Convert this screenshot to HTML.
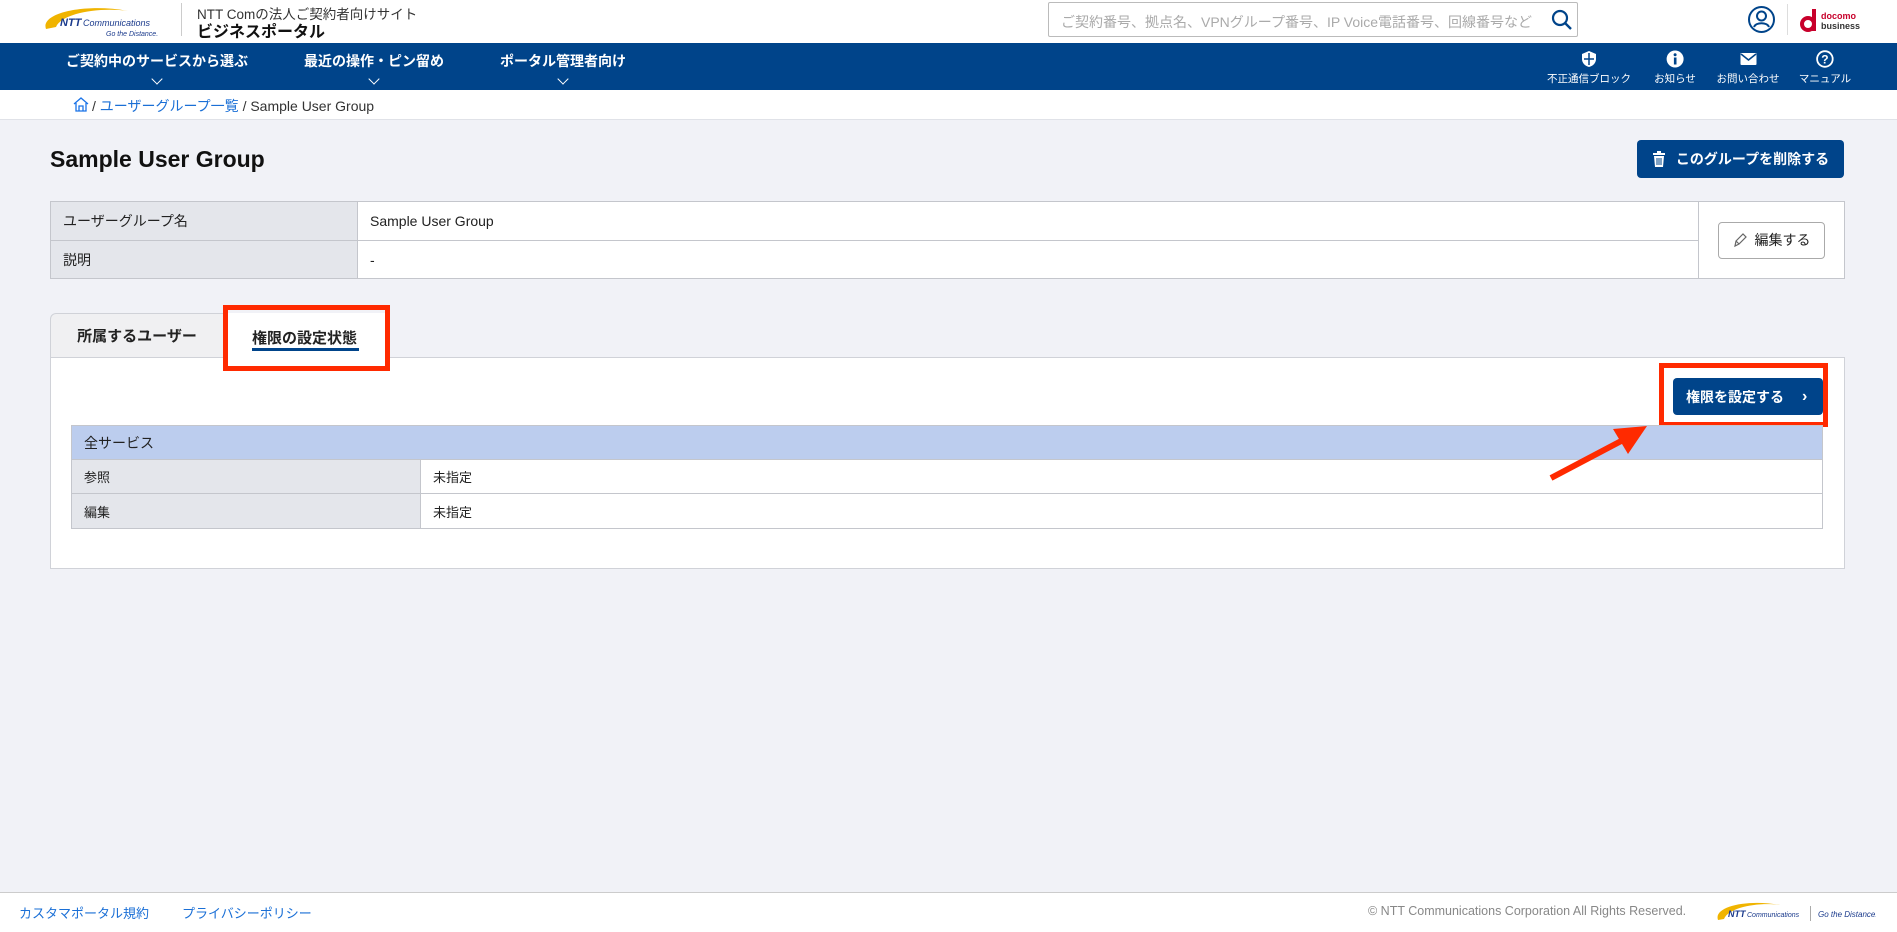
<!DOCTYPE html>
<html><head><meta charset="utf-8"><style>
*{box-sizing:border-box;margin:0;padding:0}
body{width:1897px;height:932px;background:#f1f2f7;font-family:"Liberation Sans","Noto Sans CJK JP",sans-serif;color:#222;position:relative;overflow:hidden}
.abs{position:absolute}
.hdr{left:0;top:0;width:1897px;height:43px;background:#fff}
.nav{left:0;top:43px;width:1897px;height:47px;background:#00448a;color:#fff}
.bc{left:0;top:90px;width:1897px;height:30px;background:#fff;border-bottom:1px solid #e0e2e8;font-size:14px}
.navi{position:absolute;top:8px;font-size:14px;font-weight:bold;text-align:center;transform:translateX(-50%);white-space:nowrap}
.navi .ch{display:block;margin:4px auto 0;width:8px;height:8px;border-right:1.3px solid #fff;border-bottom:1.3px solid #fff;transform:rotate(45deg)}
.ic{position:absolute;top:7px;transform:translateX(-50%);text-align:center;font-size:10.5px;white-space:nowrap}
.ic svg{display:block;margin:0 auto 3px}
table{border-collapse:collapse}
td{border:1px solid #c4c6cc;font-size:14px;padding:0 12px}
.lab{background:#e4e6eb}
.btn{background:#00448a;color:#fff;border-radius:4px;font-weight:bold;font-size:14px;display:flex;align-items:center;justify-content:center}
.red{border:5px solid #ff2a00}
</style></head><body>
<div class="abs hdr">
  <svg class="abs" style="left:40px;top:5px" width="125" height="33" viewBox="0 0 125 33">
    <path d="M6 24 C0 8 45 -2 88 6 C60 2 22 8 16 22 Z" fill="#f0b400"/>
    <text x="20" y="21" font-family="Liberation Sans" font-style="italic" font-weight="bold" font-size="11" fill="#1a3a8c">NTT</text>
    <text x="43" y="21" font-family="Liberation Sans" font-style="italic" font-size="9" fill="#1a3a8c">Communications</text>
    <text x="66" y="31" font-family="Liberation Sans" font-style="italic" font-size="7" fill="#1a3a8c">Go the Distance.</text>
  </svg>
  <div class="abs" style="left:181px;top:3px;width:1px;height:33px;background:#ccc"></div>
  <div class="abs" style="left:197px;top:3px;font-size:13.5px;color:#333">NTT Comの法人ご契約者向けサイト</div>
  <div class="abs" style="left:197px;top:18px;font-size:16px;font-weight:bold;color:#111">ビジネスポータル</div>
  <div class="abs" style="left:1048px;top:2px;width:530px;height:35px;border:1px solid #bbb;border-radius:2px;background:#fff">
    <span class="abs" style="left:12px;top:9px;font-size:14px;color:#aaa;white-space:nowrap">ご契約番号、拠点名、VPNグループ番号、IP Voice電話番号、回線番号など</span>
    <svg class="abs" style="left:502px;top:6px" width="22" height="22" viewBox="0 0 22 22"><circle cx="9" cy="9" r="7" fill="none" stroke="#00448a" stroke-width="2.2"/><path d="M14 14l6 6" stroke="#00448a" stroke-width="2.4"/></svg>
  </div>
  <svg class="abs" style="left:1747px;top:5px" width="29" height="29" viewBox="0 0 29 29"><circle cx="14.5" cy="14.5" r="12.5" fill="none" stroke="#00448a" stroke-width="2"/><circle cx="14.5" cy="11" r="4.5" fill="none" stroke="#00448a" stroke-width="2"/><path d="M7 22c2-5 13-5 15 0" fill="none" stroke="#00448a" stroke-width="2"/></svg>
  <div class="abs" style="left:1787px;top:4px;width:1px;height:31px;background:#ddd"></div>
  <svg class="abs" style="left:1800px;top:7px" width="68" height="26" viewBox="0 0 68 26"><circle cx="8" cy="17" r="6" fill="none" stroke="#c8002b" stroke-width="4"/><rect x="12" y="2" width="4" height="22" fill="#c8002b"/><text x="21" y="12" font-family="Liberation Sans" font-weight="bold" font-size="9" fill="#c8002b">docomo</text><text x="21" y="22" font-family="Liberation Sans" font-weight="bold" font-size="9" fill="#333">business</text></svg>
</div>
<div class="abs nav">
  <div class="navi" style="left:157px">ご契約中のサービスから選ぶ<span class="ch"></span></div>
  <div class="navi" style="left:374px">最近の操作・ピン留め<span class="ch"></span></div>
  <div class="navi" style="left:563px">ポータル管理者向け<span class="ch"></span></div>
  <div class="ic" style="left:1589px"><svg width="16" height="18" viewBox="0 0 16 18"><path d="M8 1L15 4v5c0 4-3 7-7 8C4 16 1 13 1 9V4z" fill="#fff"/><path d="M8 3v12M3 9h10" stroke="#00448a" stroke-width="1.5"/></svg>不正通信ブロック</div>
  <div class="ic" style="left:1675px"><svg width="18" height="18" viewBox="0 0 18 18"><circle cx="9" cy="9" r="8.5" fill="#fff"/><rect x="7.8" y="7.5" width="2.6" height="7" fill="#00448a"/><circle cx="9" cy="4.8" r="1.5" fill="#00448a"/></svg>お知らせ</div>
  <div class="ic" style="left:1748px"><svg width="18" height="18" viewBox="0 0 18 18"><rect x="1" y="3" width="16" height="12" rx="1" fill="#fff"/><path d="M1.5 4l7.5 6 7.5-6" fill="none" stroke="#00448a" stroke-width="1.6"/></svg>お問い合わせ</div>
  <div class="ic" style="left:1825px"><svg width="18" height="18" viewBox="0 0 18 18"><circle cx="9" cy="9" r="7.8" fill="none" stroke="#fff" stroke-width="1.8"/><text x="9" y="13.5" text-anchor="middle" font-family="Liberation Sans" font-weight="bold" font-size="12" fill="#fff">?</text></svg>マニュアル</div>
</div>
<div class="abs bc">
  <svg class="abs" style="left:73px;top:7px" width="16" height="15" viewBox="0 0 16 15"><path d="M1 7L8 1l7 6M3 6v8h10V6M6 14V9h4v5" fill="none" stroke="#1a73e8" stroke-width="1.3"/></svg>
  <span class="abs" style="left:92px;top:6px;white-space:nowrap"><span style="color:#333">/</span> <span style="color:#1a6fd6">ユーザーグループ一覧</span> <span style="color:#333">/ Sample User Group</span></span>
</div>
<div class="abs" style="left:50px;top:146px;font-size:23px;font-weight:bold;color:#111">Sample User Group</div>
<div class="abs btn" style="left:1637px;top:140px;width:207px;height:38px">
  <svg width="14" height="16" viewBox="0 0 14 16" style="margin-right:10px"><rect x="1" y="2" width="12" height="2" fill="#fff"/><rect x="5" y="0" width="4" height="2" fill="#fff"/><path d="M2 5h10l-1 11H3z" fill="#fff"/><path d="M5 7v7M7 7v7M9 7v7" stroke="#00448a" stroke-width="1"/></svg>このグループを削除する
</div>
<table class="abs" style="left:50px;top:201px;width:1795px;background:#fff">
  <tr style="height:39px"><td class="lab" style="width:307px">ユーザーグループ名</td><td>Sample User Group</td><td rowspan="2" style="width:146px;text-align:center"><div style="display:inline-flex;align-items:center;justify-content:center;width:107px;height:37px;border:1px solid #aaa;border-radius:4px;font-size:14px"><svg width="14" height="16" viewBox="0 0 14 16" style="margin-right:8px"><path d="M2 14l1-5 7-7 3 3-7 7z M3 9l3 3" fill="none" stroke="#666" stroke-width="1.2"/></svg>編集する</div></td></tr>
  <tr style="height:38px"><td class="lab">説明</td><td>-</td></tr>
</table>
<div class="abs" style="left:50px;top:313px;width:174px;height:44px;background:#f0f0f2;border:1px solid #d0d2d8;border-bottom:none;border-radius:6px 0 0 0;font-size:15px;font-weight:bold;display:flex;align-items:center;justify-content:center">所属するユーザー</div>
<div class="abs" style="left:50px;top:357px;width:1795px;height:212px;background:#fff;border:1px solid #d0d2d8"></div>
<div class="abs" style="left:224px;top:313px;width:163px;height:45px;background:#fff"></div>
<div class="abs" style="left:252px;top:327px;font-size:15px;font-weight:bold;white-space:nowrap">権限の設定状態</div>
<div class="abs" style="left:252px;top:348px;width:107px;height:3px;background:#00448a"></div>
<div class="abs red" style="left:223px;top:305px;width:167px;height:66px"></div>
<div class="abs btn" style="left:1673px;top:378px;width:150px;height:37px;justify-content:flex-start;padding-left:13px">権限を設定する<span style="margin-left:18px;font-size:16px">&#x203A;</span></div>
<div class="abs red" style="left:1659px;top:363px;width:169px;height:64px"></div>
<table class="abs" style="left:71px;top:425px;width:1752px;background:#fff">
  <tr style="height:34px"><td colspan="2" style="background:#bccdee">全サービス</td></tr>
  <tr style="height:34px"><td class="lab" style="width:349px;font-size:13px">参照</td><td style="font-size:13px">未指定</td></tr>
  <tr style="height:35px"><td class="lab" style="font-size:13px">編集</td><td style="font-size:13px">未指定</td></tr>
</table>
<svg class="abs" style="left:1540px;top:420px" width="115" height="65" viewBox="0 0 115 65"><path d="M11 58L85 19" stroke="#ff2a00" stroke-width="6"/><path d="M107 6L73 9 88 34z" fill="#ff2a00"/></svg>
<div class="abs" style="left:0;top:892px;width:1897px;height:40px;background:#fff;border-top:1px solid #ccc">
  <span class="abs" style="left:19px;top:10px;font-size:13px;color:#1a6fd6">カスタマポータル規約</span>
  <span class="abs" style="left:182px;top:10px;font-size:13px;color:#1a6fd6">プライバシーポリシー</span>
  <span class="abs" style="left:1368px;top:11px;font-size:12.5px;color:#888;white-space:nowrap">© NTT Communications Corporation All Rights Reserved.</span>
  <svg class="abs" style="left:1714px;top:7px" width="162" height="26" viewBox="0 0 162 26"><path d="M4 20C-1 6 35 -1 66 5 45 2 15 7 10 19z" fill="#f0b400"/><text x="14" y="17" font-family="Liberation Sans" font-style="italic" font-weight="bold" font-size="9" fill="#1a3a8c">NTT</text><text x="33" y="17" font-family="Liberation Sans" font-style="italic" font-size="7" fill="#1a3a8c">Communications</text><rect x="96" y="6" width="1" height="15" fill="#aaa"/><text x="104" y="17" font-family="Liberation Sans" font-style="italic" font-size="8" fill="#1a3a8c">Go the Distance.</text></svg>
</div>
</body></html>
